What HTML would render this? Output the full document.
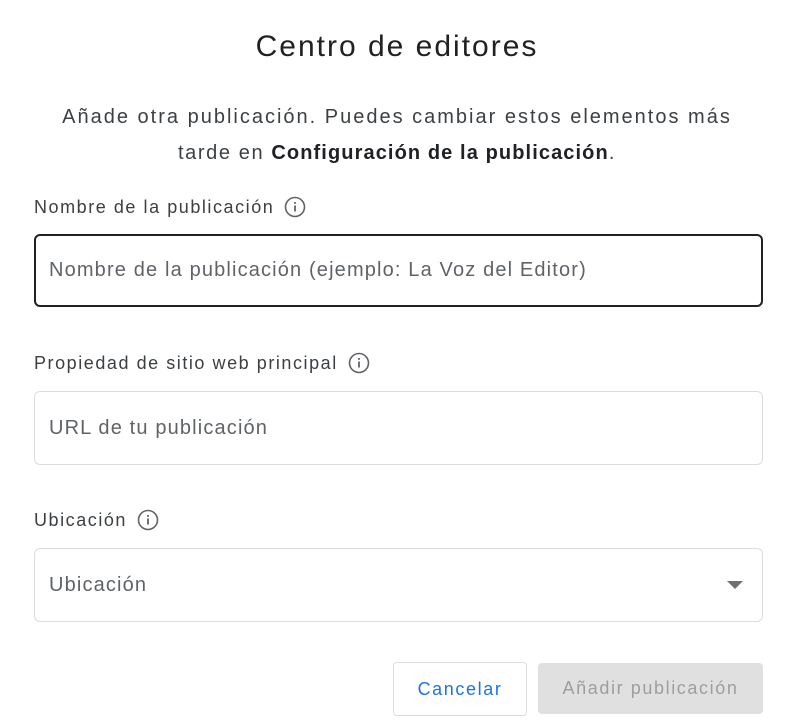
<!DOCTYPE html>
<html><head><meta charset="utf-8"><style>
*{box-sizing:border-box;margin:0;padding:0}
body{width:794px;height:724px;background:#fff;font-family:"Liberation Sans",sans-serif;color:#202124;position:relative;overflow:hidden}
h1{position:absolute;top:30px;left:0;width:794px;text-align:center;font-weight:400;font-size:30px;letter-spacing:2px;color:#202124}
.p{position:absolute;top:99px;left:0;width:794px;text-align:center;font-size:20px;line-height:36px;color:#3c4043;letter-spacing:1.6px}
.p .l1{letter-spacing:2px}
.p b{letter-spacing:1.1px}
.lbl{position:absolute;left:34px;font-size:18px;color:#3c4043;display:flex;align-items:center;letter-spacing:1.55px}
.lbl svg{margin-left:10px}
.in{position:absolute;left:34px;width:729px;border:1px solid #dadce0;border-radius:6px;font-size:20px;color:#5f6368;padding-left:14px;display:flex;align-items:center;letter-spacing:1.15px}
.btn{position:absolute;border-radius:4px;font-size:18px;display:flex;align-items:center;justify-content:center;letter-spacing:1.6px}
</style></head><body>
<h1>Centro de editores</h1>
<div class="p"><span class="l1">Añade otra publicación. Puedes cambiar estos elementos más</span><br>tarde en <b style="color:#202124">Configuración de la publicación</b>.</div>
<div class="lbl" style="top:196px">Nombre de la publicación <svg width="22" height="22" viewBox="0 0 22 22"><circle cx="11" cy="11" r="9.5" fill="none" stroke="#5f6368" stroke-width="1.6"/><rect x="10.1" y="9.5" width="1.8" height="6" fill="#5f6368"/><rect x="10.1" y="6" width="1.8" height="1.8" fill="#5f6368"/></svg></div>
<div class="in" style="top:234px;height:73px;border:2px solid #202124;padding-left:13px">Nombre de la publicación (ejemplo: La Voz del Editor)</div>
<div class="lbl" style="top:352px">Propiedad de sitio web principal <svg width="22" height="22" viewBox="0 0 22 22"><circle cx="11" cy="11" r="9.5" fill="none" stroke="#5f6368" stroke-width="1.6"/><rect x="10.1" y="9.5" width="1.8" height="6" fill="#5f6368"/><rect x="10.1" y="6" width="1.8" height="1.8" fill="#5f6368"/></svg></div>
<div class="in" style="top:391px;height:74px">URL de tu publicación</div>
<div class="lbl" style="top:509px">Ubicación <svg width="22" height="22" viewBox="0 0 22 22"><circle cx="11" cy="11" r="9.5" fill="none" stroke="#5f6368" stroke-width="1.6"/><rect x="10.1" y="9.5" width="1.8" height="6" fill="#5f6368"/><rect x="10.1" y="6" width="1.8" height="1.8" fill="#5f6368"/></svg></div>
<div class="in" style="top:548px;height:74px">Ubicación<svg style="position:absolute;left:692px;top:32px" width="16" height="8" viewBox="0 0 16 8"><path d="M0 0H16L8 8Z" fill="#6f6f6f"/></svg></div>
<div class="btn" style="left:393px;top:662px;width:134px;height:54px;border:1px solid #dadce0;color:#1a73e8">Cancelar</div>
<div class="btn" style="left:538px;top:663px;width:225px;height:51px;background:#e0e0e0;color:#9e9e9e">Añadir publicación</div>
</body></html>
